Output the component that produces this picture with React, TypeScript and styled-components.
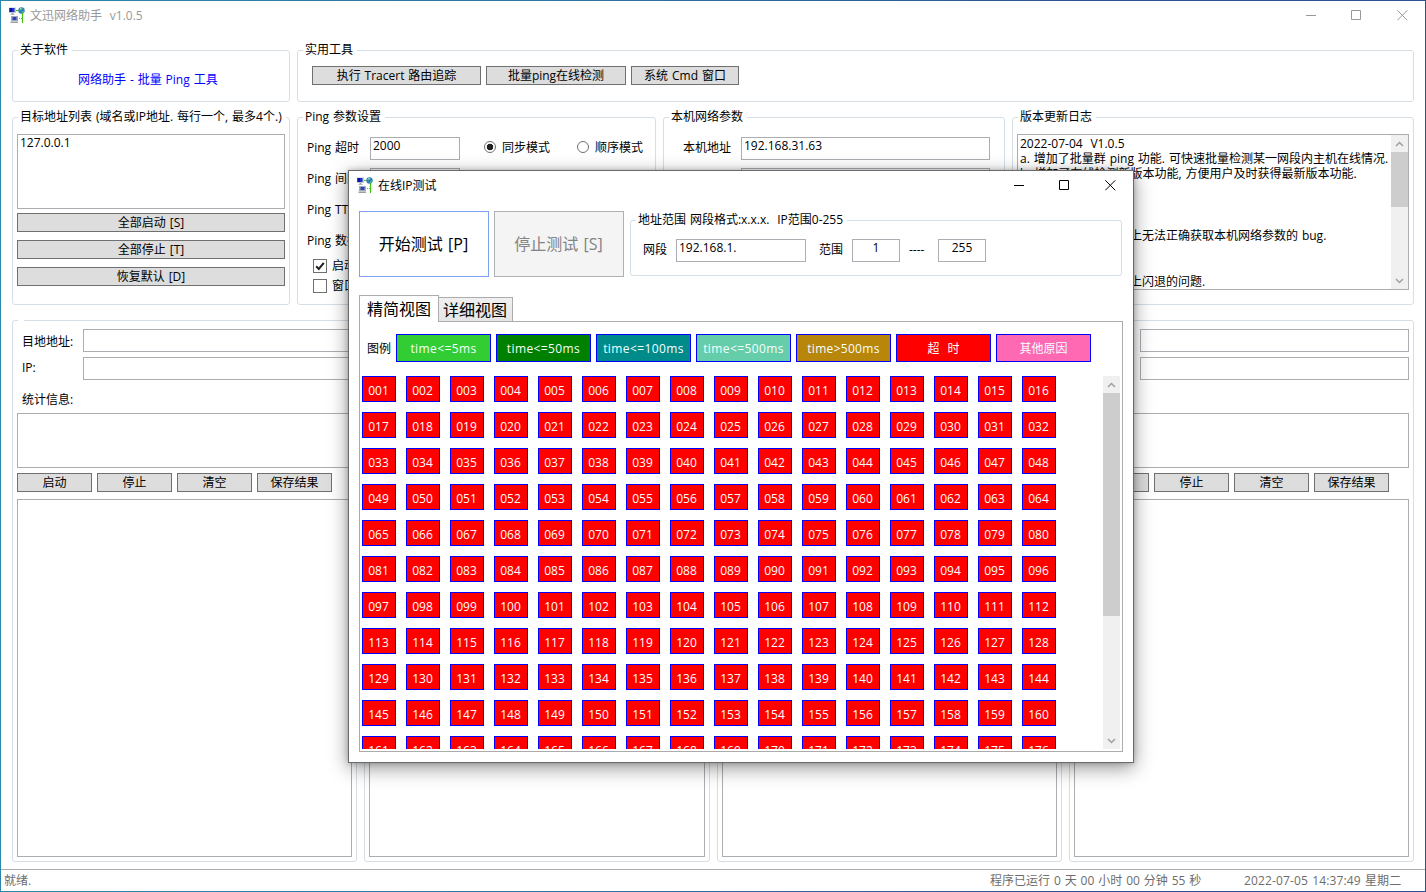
import React from "react";
import styled, { createGlobalStyle, css } from "styled-components";

const GlobalStyle = createGlobalStyle`
  * { box-sizing: border-box; }
  html, body { margin: 0; padding: 0; background: #fff; overflow: hidden; }
  body {
    font-family: "Open Sans", "Noto Sans CJK SC", sans-serif;
    font-size: 12px;
    line-height: 16px;
    word-spacing: 0.8px;
    color: #000;
    white-space: pre;
  }
`;

const Frame = styled.div`
  position: relative;
  width: 1426px;
  height: 892px;
  padding: 1px;
  background: linear-gradient(90deg, #2a86ab 0%, #2f74a4 40%, #2c5391 75%, #2c5391 100%);
`;

const Window = styled.div`
  display: flex;
  flex-direction: column;
  height: 100%;
  background: #fff;
`;

const TitleBar = styled.header<{ $active?: boolean }>`
  display: flex;
  align-items: flex-start;
  height: ${(p) => (p.$active ? 30 : 29)}px;
  padding: 6px 8px 0;
  color: ${(p) => (p.$active ? "#000" : "#999")};
`;

const Title = styled.span`
  flex: 1;
  margin: 1px 0 0 5px;
`;

const Controls = styled.div`
  display: flex;
  gap: 35px;
  padding: 3px 9px 0 0;
`;

const Content = styled.main`
  flex: 1;
  display: flex;
  flex-direction: column;
  gap: 15px;
  padding: 20px 11px 0;
`;

const Columns = styled.section<{ $cols: string; $height: number }>`
  display: grid;
  grid-template-columns: ${(p) => p.$cols};
  gap: 7px;
  height: ${(p) => p.$height}px;
`;

const Group = styled.div<{ $pad?: string }>`
  position: relative;
  min-width: 0;
  border: 1px solid #d5dfe5;
  border-radius: 3px;
  padding: ${(p) => p.$pad ?? "16px 4px 0"};
`;

const Legend = styled.span<{ $width?: number }>`
  position: absolute;
  top: -9px;
  left: 5px;
  height: 16px;
  padding: 0 4px 0 2px;
  background: #fff;
  ${(p) => p.$width && css`width: ${p.$width}px;`}
`;

const AboutLink = styled.a`
  display: block;
  margin-left: 61px;
  color: #0000ff;
`;

const Line = styled.div<{ $gap?: number; $mt?: number }>`
  display: flex;
  gap: ${(p) => p.$gap ?? 5}px;
  margin-top: ${(p) => p.$mt ?? 0}px;
`;

const Button = styled.button<{ $w?: number }>`
  width: ${(p) => (p.$w ? `${p.$w}px` : "100%")};
  height: 19px;
  flex: none;
  padding: 0;
  border: 1px solid #707070;
  background: #ddd;
  color: #000;
  font: inherit;
  word-spacing: inherit;
  line-height: 17px;
  white-space: pre;
`;

const Field = styled.div<{ $w?: number; $h?: number; $center?: boolean }>`
  ${(p) => (p.$w ? css`width: ${p.$w}px; flex: none;` : css`flex: 1;`)}
  height: ${(p) => p.$h ?? 23}px;
  padding: 0 2px;
  border: 1px solid #abadb3;
  background: #fff;
  text-align: ${(p) => (p.$center ? "center" : "left")};
`;

const Stack = styled.div<{ $gap: number; $mt?: number }>`
  display: flex;
  flex-direction: column;
  gap: ${(p) => p.$gap}px;
  margin-top: ${(p) => p.$mt ?? 0}px;
`;

const Label = styled.span<{ $w: number; $pl?: number; $mt?: number }>`
  flex: none;
  width: ${(p) => p.$w}px;
  padding-left: ${(p) => p.$pl ?? 0}px;
  margin-top: ${(p) => p.$mt ?? 0}px;
`;

const ParamRow = styled.div`
  display: flex;
  height: 23px;
  margin-bottom: 8px;
`;

const Radio = styled.span<{ $checked?: boolean; $ml: number }>`
  flex: none;
  width: 12px;
  height: 12px;
  margin: 4px 6px 0 ${(p) => p.$ml}px;
  border: 1px solid #707070;
  border-radius: 50%;
  background: ${(p) => (p.$checked ? "radial-gradient(circle, #212121 0 3px, #fff 3.6px)" : "#fff")};
`;

const Option = styled.span`
  padding-top: 3px;
`;

const CheckRow = styled.div`
  display: flex;
  gap: 5px;
  height: 14px;
  line-height: 14px;
  margin-bottom: 6px;
`;

const CheckBox = styled.span`
  display: flex;
  width: 14px;
  height: 14px;
  border: 1px solid #707070;
`;

const LogBox = styled.div`
  display: flex;
  justify-content: space-between;
  height: 156px;
  border: 1px solid #abadb3;
  overflow: hidden;
`;

const LogText = styled.div`
  width: 374px;
  padding: 0.6px 0 0 2px;
  line-height: 15.33px;
  overflow: hidden;
`;

const LogLine = styled.div`
  height: 15.33px;
`;

const LogLead = styled.span`
  display: inline-block;
  width: 110px;
  overflow: hidden;
  vertical-align: top;
`;

const ScrollTrack = styled.div`
  display: flex;
  flex-direction: column;
  flex: none;
  width: 17px;
  background: #f0f0f0;
`;

const ScrollArrow = styled.span`
  display: flex;
  align-items: center;
  justify-content: center;
  height: 17px;
`;

const Thumb = styled.div<{ $h: number }>`
  height: ${(p) => p.$h}px;
  margin-bottom: auto;
  background: #cdcdcd;
`;

const OutputBox = styled.div<{ $h: number; $mt: number }>`
  height: ${(p) => p.$h}px;
  margin-top: ${(p) => p.$mt}px;
  border: 1px solid #abadb3;
`;

const StatusBar = styled.footer`
  display: flex;
  height: 22px;
  padding: 3px 0 0 3px;
  border-top: 1px solid #acacac;
  color: #6d6d6d;
`;

const StatusItem = styled.span<{ $w?: number; $track?: number }>`
  ${(p) => (p.$w ? css`width: ${p.$w}px;` : css`flex: 1;`)}
  letter-spacing: ${(p) => p.$track ?? 0}px;
`;

const Dialog = styled.div`
  position: absolute;
  left: 348px;
  top: 170px;
  width: 786px;
  height: 593px;
  border: 1px solid #6a6a6a;
  background: #fff;
  box-shadow: 0 5px 18px rgba(0, 0, 0, 0.42), 0 0 5px rgba(0, 0, 0, 0.22);
`;

const DialogBody = styled.div`
  padding: 10px 10px 0;
`;

const Toolbar = styled.div`
  display: flex;
  gap: 5px;
  height: 66px;
`;

const BigButton = styled.button<{ $off?: boolean }>`
  width: 130px;
  height: 66px;
  padding: 0 1px 0 0;
  border: 1px solid ${(p) => (p.$off ? "#adb2b5" : "#7da2f5")};
  background: ${(p) => (p.$off ? "#f4f4f4" : "#fff")};
  color: ${(p) => (p.$off ? "#838383" : "#000")};
  font: inherit;
  font-size: 16px;
  word-spacing: 1px;
  white-space: pre;
`;

const RangeGroup = styled(Group)`
  width: 492px;
  height: 56px;
  margin: 9px 0 0 1px;
  padding: 18px 12px 0;
  display: flex;
`;

const Tabs = styled.div`
  display: flex;
  align-items: flex-end;
  height: 27px;
  margin: 18px 0 -1px;
  position: relative;
  font-size: 16px;
`;

const Tab = styled.div<{ $active?: boolean }>`
  border: 1px solid #acacac;
  border-bottom: 0;
  ${(p) =>
    p.$active
      ? css`
          width: 80px;
          height: 27px;
          padding: 5px 0 0 7px;
          background: #fff;
        `
      : css`
          width: 74px;
          height: 24px;
          margin-bottom: 1px;
          padding: 4px 0 0 4px;
          border-left: 0;
          background: linear-gradient(#f0f0f0, #e5e5e5);
        `}
`;

const Panel = styled.div`
  width: 764px;
  height: 431px;
  padding: 12px 2px 0;
  border: 1px solid #acacac;
`;

const Key = styled.span<{ $bg: string; $track?: number }>`
  width: 95px;
  height: 28px;
  border: 1px solid #0000ff;
  background: ${(p) => p.$bg};
  color: #f4ffff;
  line-height: 28px;
  letter-spacing: ${(p) => p.$track ?? 0}px;
  text-align: center;
`;

const ScrollArea = styled.div`
  display: flex;
  justify-content: space-between;
  height: 373px;
  margin-top: 14px;
  overflow: hidden;
`;

const HostGrid = styled.div`
  display: grid;
  grid-template-columns: repeat(16, 34px);
  grid-auto-rows: 26px;
  gap: 10px;
`;

const Host = styled.span`
  padding-right: 1px;
  border: 1px solid #0000ff;
  background: #ff0000;
  color: #fff;
  line-height: 27px;
  text-align: center;
`;

const AppIcon = () => (
  <svg width="16" height="16" viewBox="0 0 16 16">
    <rect x="0" y="0.5" width="7" height="5.5" fill="#c3c8d6" />
    <rect x="0.5" y="1" width="5" height="4" fill="#1c2fd0" />
    <rect x="0.5" y="1" width="2.5" height="4" fill="#0a12a0" />
    <rect x="2.5" y="6" width="2" height="1" fill="#9aa0a8" />
    <rect x="1.5" y="7" width="4" height="1" fill="#b4b8c0" />
    <path d="M7 3.5h3M13.5 6v10" stroke="#3fc80c" strokeWidth="1.2" />
    <path d="M8 11.5h5" stroke="#3fc80c" strokeWidth="1" strokeDasharray="1 1" />
    <circle cx="12.5" cy="3.500" r="3.2" fill="#2f83b0" />
    <path d="M10 3q1-2.500 3.500-2l-1 2zM12.500 6l2-2.500 1 1q-1 2-3 1.500z" fill="#58b88a" />
    <path d="M11 1.500l1.500-.5-.5 1.500z" fill="#c8eef5" />
    <rect x="2" y="9" width="7" height="5" fill="#a3a9b6" />
    <rect x="3.500" y="10" width="4" height="3" fill="#2a45b8" />
    <rect x="1.500" y="14.500" width="7.500" height="1.500" fill="#9a9fa6" />
    <rect x="3" y="14" width="5" height="1" fill="#c4c8cc" />
  </svg>
);

const WindowControls = () => (
  <Controls>
    <svg width="10" height="10" viewBox="0 0 10 10" stroke="currentColor" fill="none">
      <path d="M0 5.500h10" />
    </svg>
    <svg width="11" height="11" viewBox="0 0 11 11" stroke="currentColor" fill="none">
      <path d="M.5.5h9v9h-9z" />
    </svg>
    <svg width="11" height="11" viewBox="0 0 11 11" stroke="currentColor" fill="none">
      <path d="M.3.3l10 10M10.300.3l-10 10" />
    </svg>
  </Controls>
);

const Arrow = ({ down }: { down?: boolean }) => (
  <ScrollArrow>
    <svg width="9" height="6" viewBox="0 0 9 6" fill="none" stroke="#a0a0a0" strokeWidth="1.5">
      <path d={down ? "M1 1l3.500 3.500L8 1" : "M1 5l3.500-3.500L8 5"} />
    </svg>
  </ScrollArrow>
);

const ScrollBar = ({ thumb }: { thumb: number }) => (
  <ScrollTrack>
    <Arrow />
    <Thumb $h={thumb} />
    <Arrow down />
  </ScrollTrack>
);

const TargetPanel = () => (
  <Group $pad="8px 4px 0">
    <Legend $width={6} />
    <Line $gap={0}>
      <Label $w={66} $pl={5} $mt={5}>目地地址:</Label>
      <Field />
    </Line>
    <Line $gap={0} $mt={5}>
      <Label $w={66} $pl={5} $mt={3}>IP:</Label>
      <Field />
    </Line>
    <Line $mt={12}>
      <Label $w={80} $pl={5}>统计信息:</Label>
    </Line>
    <OutputBox $h={55} $mt={5} />
    <Line $mt={5}>
      {["启动", "停止", "清空", "保存结果"].map((t) => (
        <Button key={t} $w={75}>{t}</Button>
      ))}
    </Line>
    <OutputBox $h={358} $mt={7} />
  </Group>
);

const legendKeys = [
  { text: "time<=5ms", color: "#32cd32", track: 0.4 },
  { text: "time<=50ms", color: "#008000", track: 0.4 },
  { text: "time<=100ms", color: "#008b8b", track: 0.4 },
  { text: "time<=500ms", color: "#66cdaa", track: 0.4 },
  { text: "time>500ms", color: "#b8860b", track: 0.3 },
  { text: "超  时", color: "#ff0000" },
  { text: "其他原因", color: "#ff69b4" },
];

const hosts = Array.from({ length: 176 }, (_, i) => String(i + 1).padStart(3, "0"));

const PingDialog = () => (
  <Dialog>
    <TitleBar $active>
      <AppIcon />
      <Title>在线IP测试</Title>
      <WindowControls />
    </TitleBar>
    <DialogBody>
      <Toolbar>
        <BigButton>开始测试 [P]</BigButton>
        <BigButton $off>停止测试 [S]</BigButton>
        <RangeGroup>
          <Legend>地址范围 网段格式:x.x.x.  IP范围0-255</Legend>
          <Label $w={33} $mt={3}>网段</Label>
          <Field $w={130}>192.168.1.</Field>
          <Label $w={46} $pl={13} $mt={3}>范围</Label>
          <Field $w={48} $center>1</Field>
          <Label $w={38} $pl={9} $mt={3}>----</Label>
          <Field $w={48} $center>255</Field>
        </RangeGroup>
      </Toolbar>
      <Tabs>
        <Tab $active>精简视图</Tab>
        <Tab>详细视图</Tab>
      </Tabs>
      <Panel>
        <Line>
          <Label $w={29} $pl={5} $mt={7}>图例</Label>
          {legendKeys.map((k) => (
            <Key key={k.text} $bg={k.color} $track={k.track}>{k.text}</Key>
          ))}
        </Line>
        <ScrollArea>
          <HostGrid>
            {hosts.map((h) => (
              <Host key={h}>{h}</Host>
            ))}
          </HostGrid>
          <ScrollBar thumb={223} />
        </ScrollArea>
      </Panel>
    </DialogBody>
  </Dialog>
);

export default function App() {
  return (
    <Frame>
      <GlobalStyle />
      <Window>
        <TitleBar>
          <AppIcon />
          <Title>文迅网络助手  v1.0.5</Title>
          <WindowControls />
        </TitleBar>
        <Content>
          <Columns $cols="278px 1fr" $height={52}>
            <Group $pad="21px 4px 0">
              <Legend>关于软件</Legend>
              <AboutLink>网络助手 - 批量 Ping 工具</AboutLink>
            </Group>
            <Group $pad="15px 14px 0">
              <Legend>实用工具</Legend>
              <Line>
                <Button $w={169}>执行 Tracert 路由追踪</Button>
                <Button $w={140}>批量ping在线检测</Button>
                <Button $w={108}>系统 Cmd 窗口</Button>
              </Line>
            </Group>
          </Columns>
          <Columns $cols="278px 359px 342px 402px" $height={188}>
            <Group>
              <Legend>目标地址列表 (域名或IP地址. 每行一个, 最多4个.)</Legend>
              <Line>
                <Field $h={75}>127.0.0.1</Field>
              </Line>
              <Stack $gap={8} $mt={4}>
                <Button>全部启动 [S]</Button>
                <Button>全部停止 [T]</Button>
                <Button>恢复默认 [D]</Button>
              </Stack>
            </Group>
            <Group $pad="19px 9px 0">
              <Legend>Ping 参数设置</Legend>
              <ParamRow>
                <Label $w={63} $mt={3}>Ping 超时</Label>
                <Field $w={90}>2000</Field>
                <Radio $checked $ml={24} />
                <Option>同步模式</Option>
                <Radio $ml={27} />
                <Option>顺序模式</Option>
              </ParamRow>
              <ParamRow>
                <Label $w={63} $mt={3}>Ping 间隔</Label>
                <Field $w={90}>1000</Field>
              </ParamRow>
              <ParamRow>
                <Label $w={63} $mt={3}>Ping TTL</Label>
                <Field $w={90}>64</Field>
              </ParamRow>
              <ParamRow>
                <Label $w={63} $mt={3}>Ping 数据</Label>
                <Field $w={90}>32</Field>
              </ParamRow>
              <Line $gap={0}>
                <Label $w={6} />
                <Stack $gap={0} $mt={-2}>
                  <CheckRow>
                    <CheckBox>
                      <svg width="12" height="12" viewBox="0 0 12 12" fill="none" stroke="#212121" strokeWidth="2">
                        <path d="M2.200 6.200l2.600 2.800L9.800 2.800" />
                      </svg>
                    </CheckBox>
                    启动时最大化
                  </CheckRow>
                  <CheckRow>
                    <CheckBox />
                    窗口置顶
                  </CheckRow>
                </Stack>
              </Line>
            </Group>
            <Group $pad="19px 14px 0 19px">
              <Legend>本机网络参数</Legend>
              <ParamRow>
                <Label $w={58} $mt={3}>本机地址</Label>
                <Field>192.168.31.63</Field>
              </ParamRow>
              <ParamRow>
                <Label $w={58} $mt={3}>子网掩码</Label>
                <Field>255.255.255.0</Field>
              </ParamRow>
            </Group>
            <Group>
              <Legend>版本更新日志</Legend>
              <LogBox>
                <LogText>
                  <LogLine>2022-07-04  V1.0.5</LogLine>
                  <LogLine>a. 增加了批量群 ping 功能. 可快速批量检测某一网段内主机在线情况.</LogLine>
                  <LogLine>b. 增加了在线检测新版本功能, 方便用户及时获得最新版本功能.</LogLine>
                  <LogLine />
                  <LogLine />
                  <LogLine />
                  <LogLine><LogLead>a. 修复在某些系统</LogLead>上无法正确获取本机网络参数的 bug.</LogLine>
                  <LogLine />
                  <LogLine />
                  <LogLine><LogLead>a. 修复在某些系统</LogLead>上闪退的问题.</LogLine>
                </LogText>
                <ScrollBar thumb={55} />
              </LogBox>
            </Group>
          </Columns>
          <Columns $cols="345px 346px 345px 345px" $height={542}>
            <TargetPanel />
            <TargetPanel />
            <TargetPanel />
            <TargetPanel />
          </Columns>
        </Content>
        <StatusBar>
          <StatusItem>就绪.</StatusItem>
          <StatusItem $w={254}>程序已运行 0 天 00 小时 00 分钟 55 秒</StatusItem>
          <StatusItem $w={181} $track={0.15}>2022-07-05 14:37:49 星期二</StatusItem>
        </StatusBar>
      </Window>
      <PingDialog />
    </Frame>
  );
}
